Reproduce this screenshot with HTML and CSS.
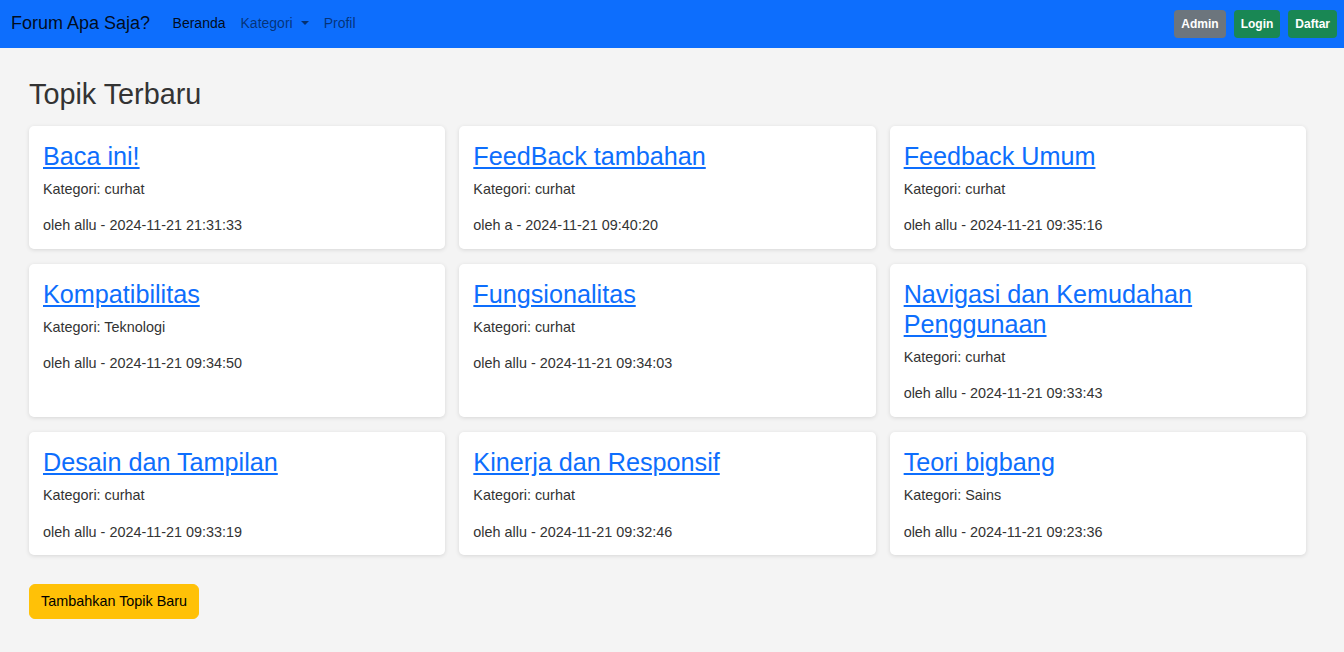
FILE: index.html
```html
<!DOCTYPE html>
<html lang="id">
<head>
<meta charset="utf-8">
<title>Forum Apa Saja?</title>
<link rel="stylesheet" href="styles.css">
</head>
<body>
<nav class="navbar">
  <a class="brand" href="#">Forum Apa Saja?</a>
  <ul class="nav">
    <li><a class="nav-link active" href="#">Beranda</a></li>
    <li><a class="nav-link dropdown" href="#">Kategori</a></li>
    <li><a class="nav-link" href="#">Profil</a></li>
  </ul>
  <div class="nav-actions">
    <a class="btn-nav btn-gray" href="#">Admin</a>
    <a class="btn-nav btn-green" href="#">Login</a>
    <a class="btn-nav btn-green" href="#">Daftar</a>
  </div>
</nav>
<main class="main">
  <h3 class="page-title">Topik Terbaru</h3>
  <div class="grid">
    <div class="card"><h4 class="card-title"><a href="#">Baca ini!</a></h4><p class="meta">Kategori: curhat</p><p class="meta">oleh allu - 2024-11-21 21:31:33</p></div>
    <div class="card"><h4 class="card-title"><a href="#">FeedBack tambahan</a></h4><p class="meta">Kategori: curhat</p><p class="meta">oleh a - 2024-11-21 09:40:20</p></div>
    <div class="card"><h4 class="card-title"><a href="#">Feedback Umum</a></h4><p class="meta">Kategori: curhat</p><p class="meta">oleh allu - 2024-11-21 09:35:16</p></div>
    <div class="card"><h4 class="card-title"><a href="#">Kompatibilitas</a></h4><p class="meta">Kategori: Teknologi</p><p class="meta">oleh allu - 2024-11-21 09:34:50</p></div>
    <div class="card"><h4 class="card-title"><a href="#">Fungsionalitas</a></h4><p class="meta">Kategori: curhat</p><p class="meta">oleh allu - 2024-11-21 09:34:03</p></div>
    <div class="card"><h4 class="card-title"><a href="#">Navigasi dan Kemudahan Penggunaan</a></h4><p class="meta">Kategori: curhat</p><p class="meta">oleh allu - 2024-11-21 09:33:43</p></div>
    <div class="card"><h4 class="card-title"><a href="#">Desain dan Tampilan</a></h4><p class="meta">Kategori: curhat</p><p class="meta">oleh allu - 2024-11-21 09:33:19</p></div>
    <div class="card"><h4 class="card-title"><a href="#">Kinerja dan Responsif</a></h4><p class="meta">Kategori: curhat</p><p class="meta">oleh allu - 2024-11-21 09:32:46</p></div>
    <div class="card"><h4 class="card-title"><a href="#">Teori bigbang</a></h4><p class="meta">Kategori: Sains</p><p class="meta">oleh allu - 2024-11-21 09:23:36</p></div>
  </div>
  <a class="btn-warning" href="#">Tambahkan Topik Baru</a>
</main>
</body>
</html>
```

FILE: styles.css
```css
* { box-sizing: border-box; }
html, body { margin: 0; padding: 0; }
body {
  font-family: "Liberation Sans", Arial, sans-serif;
  background: #f4f4f4;
  color: #333;
  font-size: 14.4px;
  line-height: 1.5;
}
.navbar {
  height: 48px;
  background: #0d6efd;
  display: flex;
  align-items: center;
  padding: 0 7px 2px 11px;
}
.brand {
  font-size: 18px;
  color: rgba(0,0,0,.9);
  text-decoration: none;
  margin-right: 15px;
}
.nav {
  list-style: none;
  margin: 0;
  padding: 0;
  display: flex;
}
.nav-link {
  display: block;
  padding: 8px 7.5px;
  font-size: 14px;
  color: rgba(0,0,0,.55);
  text-decoration: none;
}
.nav-link.active { color: rgba(0,0,0,.9); }
.dropdown::after {
  content: "";
  display: inline-block;
  margin-left: 8px;
  vertical-align: 3px;
  border-top: 4.2px solid;
  border-right: 4.2px solid transparent;
  border-left: 4.2px solid transparent;
}
.nav-actions {
  margin-left: auto;
  display: flex;
  gap: 8px;
  margin-top: 2px;
}
.btn-nav {
  display: inline-block;
  font-size: 12px;
  font-weight: bold;
  line-height: 18px;
  padding: 5px 7px;
  border-radius: 4px;
  color: #fff;
  text-decoration: none;
}
.btn-gray { background: #6c757d; }
.btn-green { background: #198754; }
.main {
  padding: 29px 38px 32px 29px;
}
.page-title {
  font-size: 28.8px;
  font-weight: 500;
  line-height: 1.2;
  margin: 0 0 14px;
  color: #333;
}
.grid {
  display: grid;
  grid-template-columns: repeat(3, 1fr);
  column-gap: 14px;
  row-gap: 15px;
}
.card {
  background: #fff;
  border-radius: 5px;
  box-shadow: 0 1px 4px rgba(0,0,0,.12);
  padding: 15px 14px 12px;
}
.card-title {
  font-size: 25.2px;
  font-weight: 400;
  line-height: 30px;
  margin: 0 0 8px;
}
.card-title a { color: #0d6efd; text-decoration: underline; }
.meta {
  margin: 0 0 15px;
  line-height: 21.6px;
}
.meta:last-child { margin-bottom: 0; }
.btn-warning {
  display: inline-block;
  margin-top: 29px;
  background: #ffc107;
  color: #000;
  font-size: 14.4px;
  line-height: 21px;
  padding: 6px 11px;
  border: 1px solid #ffc107;
  border-radius: 6px;
  text-decoration: none;
}
```
